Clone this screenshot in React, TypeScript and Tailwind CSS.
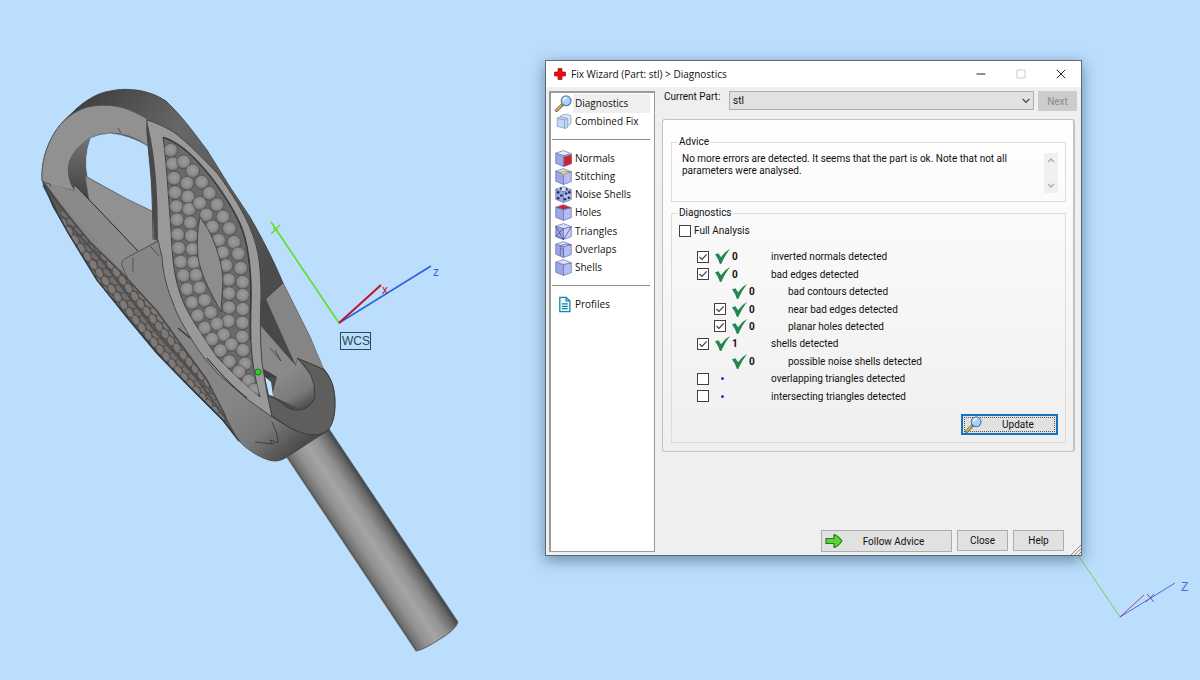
import { useState, type ReactNode } from "react";

type Check = {
  id: string;
  label: string;
  count?: number;
  nested?: boolean;
  checkable: boolean;
};

const CHECKS: Check[] = [
  { id: "normals", label: "inverted normals detected", count: 0, checkable: true },
  { id: "edges", label: "bad edges detected", count: 0, checkable: true },
  { id: "contours", label: "bad contours detected", count: 0, nested: true, checkable: false },
  { id: "near", label: "near bad edges detected", count: 0, nested: true, checkable: true },
  { id: "planar", label: "planar holes detected", count: 0, nested: true, checkable: true },
  { id: "shells", label: "shells detected", count: 1, checkable: true },
  { id: "noise", label: "possible noise shells detected", count: 0, nested: true, checkable: false },
  { id: "overlapping", label: "overlapping triangles detected", checkable: true },
  { id: "intersecting", label: "intersecting triangles detected", checkable: true },
];

// bead centres inside the leaf, in thirds of a scene unit
const BEADS: [number, number][] = [
  [422, 211], [428, 252], [461, 246], [488, 273], [432, 295], [471, 310], [515, 307], [435, 338],
  [474, 351], [538, 340], [439, 380], [477, 388], [509, 370], [561, 375], [441, 420], [481, 429],
  [529, 405], [579, 411], [443, 464], [484, 468], [547, 441], [598, 446], [446, 505], [487, 508],
  [566, 481], [612, 487], [452, 546], [491, 548], [578, 518], [625, 522], [588, 557], [632, 565],
  [460, 587], [498, 586], [596, 600], [638, 607], [471, 628], [509, 624], [597, 641], [638, 646],
  [486, 668], [524, 661], [597, 683], [638, 688], [503, 707], [542, 698], [595, 724], [637, 729],
  [524, 744], [561, 732], [581, 765], [637, 771], [546, 778], [604, 794], [571, 812], [639, 811],
  [598, 845], [645, 852], [627, 876], [656, 903], [672, 930],
];

// overlapping scales on the left flank, laid out along its length
const SCALES: [number, number][] = Array.from({ length: 28 }, (_, i) => i).flatMap((i) => {
  const t = i / 27;
  const x = 60 + 164 * t;
  const y = 212 + 203 * t + Math.sin(t * Math.PI) * 8;
  return [-18, -11, -4, 3, 10, 17].map((d, k): [number, number] => [
    x + d * 0.78 + (k % 2) * 3,
    y - d * 0.62 + (k % 2) * 4,
  ]);
});

const BODY =
  "M42 180C41 160 48 140 60 125C66 118 71 114 73 112C84 101 97 93 110 91C128 87 150 90 166 101C182 116 194 133 207 150L230 187L250 217C262 238 274 261 283 283L310 337L323 368C331 377 335 388 335 403C335 417 332 426 327 431L287 457C282 460 278 461 275 461C267 461 250 453 239 441L223 421L190 388L157 354L127 318L97 280L67 231L53 207Z";
const FLANK =
  "M52 200L68 217L90 243L122 274L157 312L180 344L207 381L226 417L232 432L223 420L190 387L157 353L127 317L97 280L67 231Z";
const LEAF =
  "M163 137C177 141 191 153 203 167C213 178 230 201 240 223C247 238 250 260 251 280C252 300 250 320 251 340C252 365 256 382 260 397C252 390 245 384 237 377L217 357L197 327C188 313 182 301 179 290C173 272 172 250 171 230L168 190C167 175 165 150 163 137Z";

function Model() {
  return (
    <g>
      <defs>
        <linearGradient id="shaft" gradientUnits="userSpaceOnUse" x1="351" y1="555" x2="393" y2="527">
          <stop offset="0" stopColor="#505356" />
          <stop offset=".08" stopColor="#73716f" />
          <stop offset=".25" stopColor="#919191" />
          <stop offset=".48" stopColor="#a5a5a5" />
          <stop offset=".7" stopColor="#929292" />
          <stop offset=".9" stopColor="#6c6a69" />
          <stop offset="1" stopColor="#474c50" />
        </linearGradient>
        <linearGradient id="hull" gradientUnits="userSpaceOnUse" x1="80" y1="100" x2="270" y2="270">
          <stop offset="0" stopColor="#3f3f3f" />
          <stop offset=".35" stopColor="#666" />
          <stop offset=".7" stopColor="#5a5a5a" />
          <stop offset="1" stopColor="#4c4c4c" />
        </linearGradient>
        <linearGradient id="cap" gradientUnits="userSpaceOnUse" x1="235" y1="400" x2="285" y2="460">
          <stop offset="0" stopColor="#868686" />
          <stop offset=".55" stopColor="#787878" />
          <stop offset="1" stopColor="#4b4b4b" />
        </linearGradient>
        <linearGradient id="cup" gradientUnits="userSpaceOnUse" x1="280" y1="375" x2="303" y2="411">
          <stop offset="0" stopColor="#8a8a8a" />
          <stop offset=".6" stopColor="#7a7a7a" />
          <stop offset="1" stopColor="#484848" />
        </linearGradient>
        <linearGradient id="throat" x1="0" y1="0" x2="0" y2="1">
          <stop offset="0" stopColor="#747474" />
          <stop offset="1" stopColor="#3f3f3f" />
        </linearGradient>
        <radialGradient id="bead" cx=".5" cy=".44" r=".56">
          <stop offset="0" stopColor="#9c9c9c" />
          <stop offset=".65" stopColor="#8b8b8b" />
          <stop offset=".88" stopColor="#737373" />
          <stop offset="1" stopColor="#555" />
        </radialGradient>
        <clipPath id="leafClip"><path d={LEAF} /></clipPath>
        <clipPath id="flankClip"><path d={FLANK} /></clipPath>
      </defs>

      {/* shaft */}
      <path d="M286 456L329 429L458 622Q456 630 437 641Q423 650 416 651Z" fill="url(#shaft)" stroke="#4c5358" strokeWidth=".8" />

      {/* hull and front panel */}
      <path d={BODY} fill="url(#hull)" stroke="#3c4144" strokeWidth=".8" />
      <path
        d="M45 183L74 191L122 262L160 238L163 267L173 303L192 340L217 372L247 398L272 417C288 428 302 438 326 431L287 457C282 460 278 461 275 461C267 461 250 453 239 441L226 417L207 380L180 343L157 311L122 273L88 241Z"
        fill="url(#cap)"
      />
      {/* ring face */}
      <path
        d="M42 180C41 160 48 140 60 125C72 112 84 107 94 106C118 103 134 111 147 119L153 139L148 146Q130 133 110 133Q98 134 90 138Q73 149 69 163Q66 178 75 191L45 184Z"
        fill="#919191"
        stroke="#4d4d4d"
        strokeWidth=".7"
      />
      <path d="M90 138Q98 134 110 133Q130 135 148 146L151 180L153 213L127 200L87 177Q83 158 90 138Z" fill="#badefb" stroke="#53636e" strokeWidth=".6" />
      <path d="M90 138Q73 149 69 163Q66 178 75 191L75 185L89 201L87 177Q83 158 90 138Z" fill="url(#throat)" />
      <path d="M85 176L127 199L154 212L158 240L138 253L89 201Z" fill="#919191" stroke="#555" strokeWidth=".7" />
      <path d="M45 183L74 191L75 185L138 251L122 262L128 276Z" fill="#8a8a8a" />
      <path d="M75 185L138 251" stroke="#292929" strokeWidth="1" fill="none" />
      <path d="M122 262Q124 258 128 256L160 239L164 270L173 303L140 288Z" fill="#868686" />
      <path d="M133 290L122 266Q120 261 128 257L160 240M133 258L133 272M150 246L159 256" stroke="#484848" strokeWidth=".8" fill="none" />
      <path d="M118 128L121 133M43 182L50 184L51 187" stroke="#353535" strokeWidth=".7" fill="none" />

      {/* scaled flank */}
      <path d={FLANK} fill="#5c5a58" />
      <g clipPath="url(#flankClip)">
        {SCALES.map(([x, y], i) => (
          <ellipse key={i} cx={x} cy={y} rx="5.4" ry="3.6" transform={`rotate(${i % 2 ? 35 : 62} ${x} ${y})`} fill={i % 3 ? "#7d7977" : "#706d6c"} stroke="#4f4c4a" strokeWidth=".8" />
        ))}
        <path d="M70 225L103 262L133 302L160 337L195 376L228 422" stroke="#4f4f4f" strokeWidth="2" fill="none" />
      </g>
      <path d="M43 183L68 215L90 242L122 273L157 311L180 343L207 380L226 417" stroke="#4a4a4a" strokeWidth="1.6" fill="none" />
      <path d="M43 185L67 231L97 280L127 317L157 353L190 387L223 420L239 441" stroke="#353b3f" strokeWidth="1.5" fill="none" />

      {/* right flank and cup */}
      <path d="M266 299L283 283L310 337L324 369L297 358L295 366L280 337Z" fill="#858585" />
      <path d="M262 302L283 283" stroke="#414141" strokeWidth=".9" />
      <path d="M261 302L266 299L296 366L261 326Z" fill="#484848" />
      <path d="M260 325L296 366L297 358L315 380L315 398L303 410L272 396L277 377L262 370Z" fill="url(#cup)" />
      <path d="M270 348L281 361L275 350" stroke="#404040" strokeWidth=".8" fill="none" />
      <path d="M262 368L277 377L265 378Z" fill="#3d3d3d" />
      <path
        d="M297 358L323 369C331 377 335 388 335 403C335 417 332 426 327 431C315 439 299 433 287 426L272 416L267 395Q278 399 287 407C299 414 311 408 315 397Q316 374 297 358Z"
        fill="#5e5e5e"
        stroke="#333"
        strokeWidth=".8"
      />
      <path d="M265 377L271 382L273 396L269 395Z" fill="#c2e4fd" />

      {/* leaf frame */}
      <path
        d="M147 120C154 122 163 126 170 130C181 136 201 156 217 173C229 189 245 213 252 233C259 250 261 270 261 297C260 320 260 340 262 363L267 393L272 417L247 399L217 373C207 361 199 352 192 340C184 327 177 315 173 303C168 291 163 275 162 257L158 240L153 239L152 190C151 160 146 139 147 120Z"
        fill="#999"
        stroke="#404040"
        strokeWidth=".9"
      />
      <path d="M147 121C154 150 158 180 158 240L154 238L152 190C151 160 145 136 147 121Z" fill="#494949" />
      <path d={LEAF} fill="#6a6a6a" stroke="#404040" strokeWidth="1" />
      <g clipPath="url(#leafClip)">
        {BEADS.map(([x, y], i) => (
          <circle key={i} cx={30 + x / 3} cy={80 + y / 3} r="7" fill="url(#bead)" stroke="#484848" strokeWidth=".5" />
        ))}
        <path d="M163 137C177 141 191 153 203 167C213 178 230 201 240 223C247 238 250 260 251 280C252 300 250 320 251 340" stroke="#3a3a3a" strokeWidth="2.4" fill="none" />
      </g>
      <path d="M200 217Q209 230 212 237Q222 260 223 280L221 312Q214 299 208 287Q200 270 198 257Q196 235 200 217Z" fill="#8d8d8d" stroke="#404040" strokeWidth=".9" />
      <path d="M207 358Q230 385 247 398M178 328L190 338" stroke="#333" strokeWidth="1.1" fill="none" />
      <path d="M272 422L277 434L278 443L270 440L272 444M255 442L274 444" stroke="#333" strokeWidth=".8" fill="none" />
      <circle cx="258" cy="372" r="3" fill="#20d720" stroke="#126c12" strokeWidth=".9" />
    </g>
  );
}

function Scene() {
  return (
    <svg className="absolute left-0 top-0" width="1200" height="680" viewBox="0 0 1200 680" role="img" aria-label="Part viewport">
      <Model />
      <g fill="none" strokeWidth="1.6" fontFamily="'Liberation Sans', sans-serif">
        <path d="M271 222L339 323" stroke="#62dc25" />
        <path d="M280 225L271 234M273 228L278 231" stroke="#62dc25" strokeWidth="1.2" />
        <path d="M339 323L431 266" stroke="#3160dc" />
        <path d="M339 323L381 285" stroke="#c0142c" strokeWidth="2" />
        <text x="382" y="294" fontSize="12" fill="#c0142c" stroke="none">x</text>
        <text x="433" y="276" fontSize="12" fill="#3160dc" stroke="none">z</text>
        <rect x="340.5" y="332.5" width="30" height="17" stroke="#2a4658" strokeWidth="1" />
        <text x="342" y="345" fontSize="12" fill="#2a4658" stroke="none">WCS</text>
      </g>
      <g fill="none" strokeWidth="1" fontFamily="'Liberation Sans', sans-serif">
        <path d="M1078 555L1120 617" stroke="#69d568" />
        <path d="M1120 617L1175 583" stroke="#4a6fdc" />
        <path d="M1120 617L1144 595" stroke="#a8456f" />
        <path d="M1147 594L1154 602M1154 594L1146 602" stroke="#8c4590" />
        <text x="1181" y="591" fontSize="12" fill="#4a6fdc" stroke="none">Z</text>
      </g>
    </svg>
  );
}

function Magnifier() {
  return (
    <svg className="size-[17px] shrink-0" viewBox="0 0 16 16" fill="none">
      <path d="M1.5 14.5L7 9" stroke="#6d6a4a" strokeWidth="3" strokeLinecap="round" />
      <path d="M1.6 14.2L6 9.8" stroke="#d9b64e" strokeWidth="1.5" strokeLinecap="round" />
      <circle cx="10.5" cy="5.5" r="4.6" fill="#a6d4f8" stroke="#5f82ac" strokeWidth="1.2" />
      <path d="M8 5a3 3 0 0 1 3-2.500" stroke="#fff" strokeWidth="1.3" />
    </svg>
  );
}

function Cube({ front = "#b5bff5", top = "#d9e4fb", children }: { front?: string; top?: string; children?: ReactNode }) {
  return (
    <svg className="size-[17px] shrink-0" viewBox="0 0 16 16" fill="none" stroke="#6a72ad" strokeWidth=".7" strokeLinejoin="round">
      <path d="M.7 3L8 5.200V15.500L.7 12.500Z" fill="#9ca7e8" />
      <path d="M8 5.200L15.300 3.500V12.800L8 15.500Z" fill={front} />
      <path d="M.7 3L8 .6L15.300 3.500L8 5.200Z" fill={top} />
      {children}
    </svg>
  );
}

const CombinedIcon = () => (
  <svg className="size-[17px] shrink-0" viewBox="0 0 16 16" stroke="#8093ba" strokeWidth=".7" strokeLinejoin="round">
    <path d="M5 3L9 1L15 2.500V10L12 12L5 10Z" fill="#dceafb" />
    <path d="M2 5L5 3.500L12 5V13.500L9.500 14.500L2 12.500Z" fill="#c2d8f7" />
    <path d="M2 5L9 6.500L12 5M9 6.500V14.500" fill="none" />
  </svg>
);

const NAV: { name: string; icon: ReactNode }[][] = [
  [
    { name: "Diagnostics", icon: <Magnifier /> },
    { name: "Combined Fix", icon: <CombinedIcon /> },
  ],
  [
    {
      name: "Normals",
      icon: <Cube top="#e8edfa"><path d="M8.600 6.500L15.300 4.800V12.800L8.600 15.200Z" fill="#d52027" stroke="#8d4668" /></Cube>,
    },
    { name: "Stitching", icon: <Cube><path d="M4.500 4.200L9 3.200L14.500 3.600L8 6.200Z" fill="#eee36c" stroke="#93925c" /></Cube> },
    {
      name: "Noise Shells",
      icon: (
        <Cube>
          <g fill="#1e2d4d" stroke="none">
            <circle cx="3" cy="6" r="1.200" /><circle cx="6" cy="9" r="1.200" /><circle cx="3" cy="11.500" r="1.200" />
            <circle cx="10.500" cy="7" r="1.200" /><circle cx="13.500" cy="6" r="1.200" /><circle cx="13" cy="11" r="1.200" />
            <circle cx="9.500" cy="12.500" r="1.200" /><circle cx="5.500" cy="2.500" r="1" /><circle cx="11" cy="3" r="1" />
          </g>
        </Cube>
      ),
    },
    { name: "Holes", icon: <Cube top="#cf1f36" /> },
    {
      name: "Triangles",
      icon: <Cube front="#c5cff9"><path d="M.7 3L8 15.500L15.300 3.500M8 5.200L.7 12.500L8 15.500" stroke="#434994" /></Cube>,
    },
    { name: "Overlaps", icon: <Cube><path d="M5 4.300L10 3L15.300 3.500M5 4.300V13.800M5 7L8 8V15.500" stroke="#59629c" fill="none" /></Cube> },
    { name: "Shells", icon: <Cube /> },
  ],
  [
    {
      name: "Profiles",
      icon: (
        <svg className="size-[17px] shrink-0" viewBox="0 0 16 16" fill="none" stroke="#1c83ad" strokeWidth="1.200">
          <path d="M4.500 1.200H10.500L14 4.600V14.800H4.500Z" fill="#e8f7fd" />
          <path d="M10.500 1.200V4.600H14M6.500 7.500H12M6.500 9.700H12M6.500 11.900H12" />
        </svg>
      ),
    },
  ],
];

const NAV_HEIGHT = ["h-[37px]", "h-[128px]", "h-[18px]"];

function Sidebar() {
  const [active, setActive] = useState("Diagnostics");
  return (
    <nav className="w-[106px] shrink-0 border border-t-2 border-l-2 border-[#9a9a9a] bg-white pt-px pr-1 pl-px font-['Open_Sans',sans-serif]">
      {NAV.map((group, g) => (
        <div key={g}>
          {g > 0 && <hr className="mt-2 mb-[9px] border-[#8c8c8c]" />}
          <ul className={`flex flex-col ${NAV_HEIGHT[g]}`}>
            {group.map((item) => (
              <li key={item.name} className="min-h-0 flex-1">
                <button
                  onClick={() => setActive(item.name)}
                  className="flex h-full w-full items-center gap-px pl-[3px] text-left whitespace-nowrap"
                >
                  {item.icon}
                  <span className={`flex h-full flex-1 items-center pl-[2px] ${active === item.name ? "bg-[#efefef]" : ""}`}>
                    {item.name}
                  </span>
                </button>
              </li>
            ))}
          </ul>
        </div>
      ))}
    </nav>
  );
}

function CheckBox({ id, checked, onChange }: { id: string; checked: boolean; onChange: () => void }) {
  return (
    <span className="grid size-3 shrink-0">
      <input
        id={id}
        type="checkbox"
        checked={checked}
        onChange={onChange}
        className="col-start-1 row-start-1 size-3 appearance-none border border-[#404040] bg-white"
      />
      {checked && (
        <svg className="pointer-events-none col-start-1 row-start-1 size-3" viewBox="0 0 12 12" fill="none">
          <path d="M2.500 6L5 8.500L9.700 3.300" stroke="#404040" strokeWidth="1.200" />
        </svg>
      )}
    </span>
  );
}

function GreenTick() {
  return (
    <svg className="size-[15px] shrink-0" viewBox="0 0 14 14">
      <path d="M0 5L3.200 4L5.600 7.600Q9 2.500 14 0Q9 6.500 5.800 14H4.600Q3 9 0 5Z" fill="#24874d" />
    </svg>
  );
}

function Diagnostics() {
  const [full, setFull] = useState(false);
  const [on, setOn] = useState(["normals", "edges", "near", "planar", "shells"]);
  const toggle = (id: string) =>
    setOn((prev) => (prev.includes(id) ? prev.filter((x) => x !== id) : [...prev, id]));

  return (
    <fieldset className="mt-1 flex flex-col border border-[#dcdcdc] px-[7px] pb-[7px]">
      <legend className="-ml-px px-px leading-[14px]">Diagnostics</legend>
      <div className="mt-1 flex items-center gap-[3px] leading-[14px]">
        <CheckBox id="full" checked={full} onChange={() => setFull(!full)} />
        <label htmlFor="full">Full Analysis</label>
      </div>
      <ul className="mt-[10px] flex h-[157px] flex-col pl-[18px]">
        {CHECKS.map((c) => (
          <li key={c.id} className={`flex min-h-0 flex-1 items-center ${c.nested ? "pl-[17px]" : ""}`}>
            <span className="flex w-[17px] shrink-0">
              {c.checkable && <CheckBox id={c.id} checked={on.includes(c.id)} onChange={() => toggle(c.id)} />}
            </span>
            <span className="flex w-[17px] shrink-0 justify-center">
              {c.count === undefined ? <span className="size-[3px] rounded-full bg-[#3530bd]" /> : <GreenTick />}
            </span>
            <span className="w-[40px] shrink-0 pl-px font-bold">{c.count}</span>
            <label htmlFor={c.checkable ? c.id : undefined}>{c.label}</label>
          </li>
        ))}
      </ul>
      <button className="mt-[9px] flex h-[21px] w-[97px] items-center self-end border-2 border-[#1673bd] bg-[#e1e1e1] p-px">
        <span className="flex h-full flex-1 items-center border border-dotted border-[#555] pr-2">
          <Magnifier />
          <span className="flex-1 pl-2">Update</span>
        </span>
      </button>
    </fieldset>
  );
}

function FixWizard() {
  return (
    <section
      aria-label="Fix Wizard"
      className="absolute left-[545px] top-[60px] flex h-[496px] w-[537px] flex-col border border-[#5b6a76] bg-[#efefef] shadow-[0_4px_14px_rgba(20,50,80,0.5)]"
    >
      <header className="flex h-[26px] shrink-0 items-center bg-white pl-2">
        <svg className="size-3" viewBox="0 0 12 12">
          <path d="M4 .5H8V4H11.500V8H8V11.500H4V8H.5V4H4Z" fill="#e50d12" stroke="#a31216" strokeWidth=".7" />
        </svg>
        <h1 className="flex-1 pl-[5px] font-['Open_Sans',sans-serif]">Fix Wizard (Part: stl) &gt; Diagnostics</h1>
        <div className="flex">
          <button aria-label="Minimize" className="flex w-[40px] justify-center">
            <svg className="size-[10px]" viewBox="0 0 10 10"><path d="M.5 5H9.500" stroke="#222" /></svg>
          </button>
          <button aria-label="Maximize" disabled className="flex w-[40px] justify-center">
            <svg className="size-[10px]" viewBox="0 0 10 10"><path d="M1 1H9V9H1Z" fill="none" stroke="#ccc" /></svg>
          </button>
          <button aria-label="Close window" className="flex w-[40px] justify-center">
            <svg className="size-[10px]" viewBox="0 0 10 10"><path d="M.7 .7L9.300 9.300M9.300 .7L.7 9.300" stroke="#222" /></svg>
          </button>
        </div>
      </header>

      <div className="flex flex-1 gap-[7px] pt-1 pr-1 pb-[3px] pl-[3px]">
        <Sidebar />
        <main className="flex flex-1 flex-col">
          <div className="flex items-start">
            <label htmlFor="part" className="w-[67px] pl-[2px] leading-3">Current Part:</label>
            <div className="grid flex-1">
              <select id="part" className="col-start-1 row-start-1 h-[19px] appearance-none border border-[#adadad] bg-[#e1e1e1] px-[3px]">
                <option>stl</option>
              </select>
              <svg className="pointer-events-none col-start-1 row-start-1 mr-1 h-[6px] w-2 self-center justify-self-end" viewBox="0 0 8 6" fill="none">
                <path d="M.7 1L4 4.300L7.300 1" stroke="#444" strokeWidth="1.200" />
              </svg>
            </div>
            <button disabled className="ml-1 h-5 w-[39px] bg-[#ccc] text-[#8b8b8b]">Next</button>
          </div>

          <div className="mt-2 mr-[2px] rounded-[3px] border border-r-2 border-[#c2c2c2] bg-linear-to-b from-white to-[#efefef] pt-[15px] pr-[7px] pb-2 pl-2">
            <fieldset className="border border-[#dcdcdc] px-[7px] pb-2">
              <legend className="-ml-px px-px leading-[14px]">Advice</legend>
              <div className="flex h-[44px] justify-between pl-[3px]">
                <p className="w-[350px] pt-1 leading-3">
                  No more errors are detected. It seems that the part is ok. Note that not all parameters were analysed.
                </p>
                <div className="mt-1 flex h-[40px] w-[14px] flex-col items-center justify-between bg-[#f0f0f0] py-[5px]">
                  <svg className="h-[5px] w-2" viewBox="0 0 8 5" fill="none"><path d="M1 4L4 1L7 4" stroke="#aaa" strokeWidth="1.300" /></svg>
                  <svg className="h-[5px] w-2" viewBox="0 0 8 5" fill="none"><path d="M1 1L4 4L7 1" stroke="#aaa" strokeWidth="1.300" /></svg>
                </div>
              </div>
            </fieldset>
            <Diagnostics />
          </div>

          <footer className="mt-auto mr-[13px] flex items-start justify-end gap-[5px]">
            <button className="flex h-[22px] w-[131px] items-center border border-[#adadad] bg-[#e1e1e1] pl-[2px]">
              <svg className="h-4 w-[20px]" viewBox="0 0 18 16">
                <path d="M1 5.500H9V1.500Q13 2.500 17 8Q13 13.500 9 14.500V10.500H1Z" fill="#5bd336" stroke="#267c20" strokeWidth="1.200" strokeLinejoin="round" />
              </svg>
              <span className="flex-1 pr-2">Follow Advice</span>
            </button>
            <button className="h-[21px] w-[51px] border border-[#adadad] bg-[#e1e1e1]">Close</button>
            <button className="h-[21px] w-[51px] border border-[#adadad] bg-[#e1e1e1]">Help</button>
          </footer>
        </main>
      </div>
      <svg className="absolute right-0 bottom-0 size-[10px]" viewBox="0 0 10 10">
        <path d="M0 10L10 0M3.500 10L10 3.500M7 10L10 7" stroke="#8c8c8c" />
      </svg>
    </section>
  );
}

export default function App() {
  return (
    <div className="relative min-h-screen overflow-hidden bg-[#badefb] font-[Roboto,'Open_Sans',sans-serif] text-[10px] text-[#111]">
      <Scene />
      <FixWizard />
    </div>
  );
}
